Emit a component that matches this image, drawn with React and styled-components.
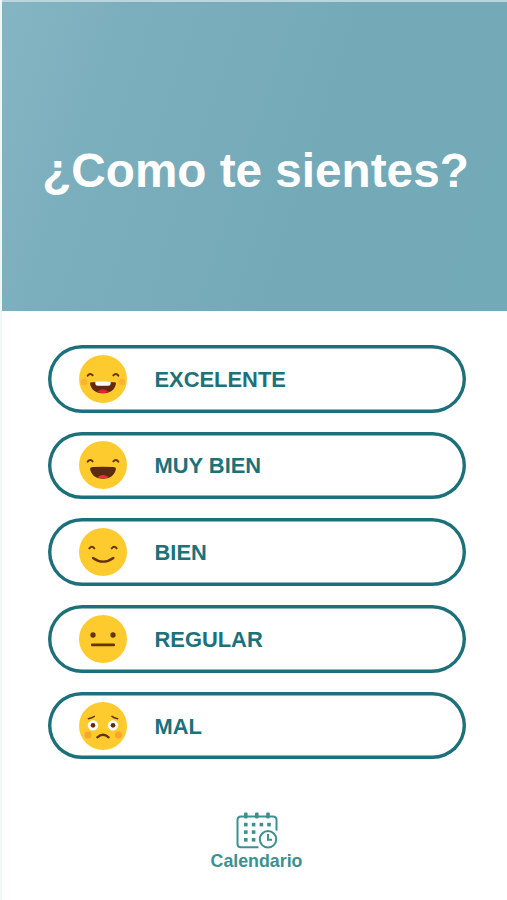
import React, { useState } from "react";
import styled, { createGlobalStyle } from "styled-components";

const GlobalStyle = createGlobalStyle`
  * {
    box-sizing: border-box;
  }

  body {
    margin: 0;
    background: #ffffff;
    font-family: "Liberation Sans", Arial, sans-serif;
  }
`;

const Container = styled.div`
  display: flex;
  flex-direction: column;
  width: 100%;
  height: 100vh;
  border-left: 2px solid #f1f6f8;
  overflow: hidden;
`;

const Header = styled.header`
  display: flex;
  align-items: center;
  justify-content: center;
  height: 310.5px;
  flex-shrink: 0;
  padding: 29px 0 0 2px;
  border-top: 2px solid #b9d5de;
  background: linear-gradient(
    108deg,
    #84b5c3 0%,
    #7cafbd 20%,
    #78acbb 42%,
    #74aab8 60%,
    #73aab8 100%
  );
`;

const Title = styled.h1`
  margin: 0;
  color: #ffffff;
  font-size: 47.7px;
  line-height: 56px;
  font-weight: bold;
  white-space: nowrap;
`;

const MoodList = styled.div`
  display: flex;
  flex-direction: column;
  gap: 19.2px;
  padding: 34.5px 41.5px 0 46px;
`;

const MoodButton = styled.button`
  display: flex;
  align-items: center;
  gap: 28px;
  width: 100%;
  height: 67.5px;
  padding: 0 30.5px;
  border: 0;
  border-radius: 34px;
  box-shadow: inset 0 0 0 3.4px #1b7079;
  background: #ffffff;
  color: #1b727b;
  font-family: inherit;
  font-size: 21.9px;
  font-weight: bold;
  cursor: pointer;
`;

const Label = styled.span`
  padding-top: 2px;
`;

const Face = styled.svg`
  width: 48px;
  height: 48px;
  flex-shrink: 0;
`;

const CalendarLink = styled.button`
  display: flex;
  flex-direction: column;
  align-items: center;
  align-self: center;
  gap: 1px;
  margin-top: 53px;
  margin-left: 4px;
  padding: 0;
  border: 0;
  background: none;
  color: #3b918f;
  font-family: inherit;
  font-size: 17.8px;
  line-height: 20px;
  font-weight: bold;
  cursor: pointer;
`;

const CalendarSvg = styled.svg`
  width: 42px;
  height: 38px;
`;

const HappyEyes = () => (
  <g fill="none" stroke="#65340f" strokeWidth="6" strokeLinecap="round">
    <path d="M53 89 Q61 79 68 88" />
    <path d="M130 88 Q138 79 145 89" />
  </g>
);

const Excellent = () => (
  <>
    <circle cx="42" cy="108" r="10" fill="#fdb235" />
    <circle cx="156" cy="108" r="10" fill="#fdb235" />
    <HappyEyes />
    <path
      d="M60 113 Q60 108 67 109 Q99 106 131 109 Q138 108 138 113 C134 133 119 142 99 142 C79 142 64 133 60 113Z"
      fill="#65280f"
    />
    <path d="M81 138 Q99 122 117 138 Q99 145 81 138Z" fill="#e8242b" />
    <path
      d="M76 107 Q99 104 122 107 V113 Q122 119 115 119 H83 Q76 119 76 113Z"
      fill="#ffffff"
    />
  </>
);

const VeryGood = () => (
  <>
    <HappyEyes />
    <path
      d="M60 110 Q61 105 68 105 Q99 103 130 105 Q138 105 138 110 C134 131 118 140 99 140 C80 140 64 131 60 110Z"
      fill="#5c2a10"
    />
    <path d="M82 136 Q99 122 116 136 Q99 143 82 136Z" fill="#e2353a" />
  </>
);

const Good = () => (
  <>
    <g fill="none" stroke="#65340f" strokeWidth="6" strokeLinecap="round">
      <path d="M58 88 Q66 79 73 88" />
      <path d="M125 88 Q133 79 140 88" />
      <path d="M69 117 Q99 139 130 117" strokeWidth="7" />
    </g>
  </>
);

const Regular = () => (
  <g fill="#65340f">
    <circle cx="69" cy="87" r="8" />
    <circle cx="129" cy="87" r="8" />
    <rect x="63" y="112.5" width="72" height="8.5" rx="3" />
  </g>
);

const Bad = () => (
  <>
    <circle cx="54" cy="126" r="10.5" fill="#f7a52c" />
    <circle cx="145" cy="126" r="10.5" fill="#f7a52c" />
    <circle cx="69" cy="97" r="15.5" fill="#ffffff" />
    <circle cx="129" cy="97" r="15.5" fill="#ffffff" />
    <circle cx="69" cy="97" r="7" fill="#65280f" />
    <circle cx="129" cy="97" r="7" fill="#65280f" />
    <g fill="none" stroke="#65340f" strokeLinecap="round">
      <path d="M55 77 Q66 75 73 70" strokeWidth="4.5" />
      <path d="M126 70 Q132 75 143 77" strokeWidth="4.5" />
      <path d="M82 133 Q99 118 116 133" strokeWidth="7" />
    </g>
  </>
);

const CalendarIcon = () => (
  <CalendarSvg viewBox="0 0 42 38">
    <g fill="none" stroke="#3b918f" strokeWidth="2">
      <path d="M22.5 35.2 H5 Q1.5 35.2 1.5 31.7 V8 Q1.5 4.5 5 4.5 H37 Q40.5 4.5 40.5 8 V18.5" />
      <circle cx="32" cy="27.3" r="8.2" />
      <path d="M32 22 V27.8 H36" />
    </g>
    <g fill="#3b918f">
      <rect x="8" y="0.5" width="3.6" height="6" rx="1" />
      <rect x="19" y="0.5" width="3.6" height="6" rx="1" />
      <rect x="30.2" y="0.5" width="3.6" height="6" rx="1" />
      {[8, 15.8, 23.6, 31.2].map((x) => (
        <rect key={x} x={x} y="10.8" width="3.6" height="3.6" />
      ))}
      {[18.3, 26].map((y) =>
        [8, 15.8].map((x) => (
          <rect key={`${x}-${y}`} x={x} y={y} width="3.6" height="3.6" />
        ))
      )}
    </g>
  </CalendarSvg>
);

const moods = [
  { label: "EXCELENTE", Features: Excellent },
  { label: "MUY BIEN", Features: VeryGood },
  { label: "BIEN", Features: Good },
  { label: "REGULAR", Features: Regular },
  { label: "MAL", Features: Bad },
];

const App = () => {
  const [mood, setMood] = useState("");

  return (
    <>
      <GlobalStyle />
      <Container>
        <Header>
          <Title>¿Como te sientes?</Title>
        </Header>
        <MoodList>
          {moods.map(({ label, Features }) => (
            <MoodButton
              key={label}
              aria-pressed={mood === label}
              onClick={() => setMood(label)}
            >
              <Face viewBox="27 27 144 144">
                <circle cx="99" cy="99" r="72" fill="#fecb2f" />
                <Features />
              </Face>
              <Label>{label}</Label>
            </MoodButton>
          ))}
        </MoodList>
        <CalendarLink>
          <CalendarIcon />
          Calendario
        </CalendarLink>
      </Container>
    </>
  );
};

export default App;
